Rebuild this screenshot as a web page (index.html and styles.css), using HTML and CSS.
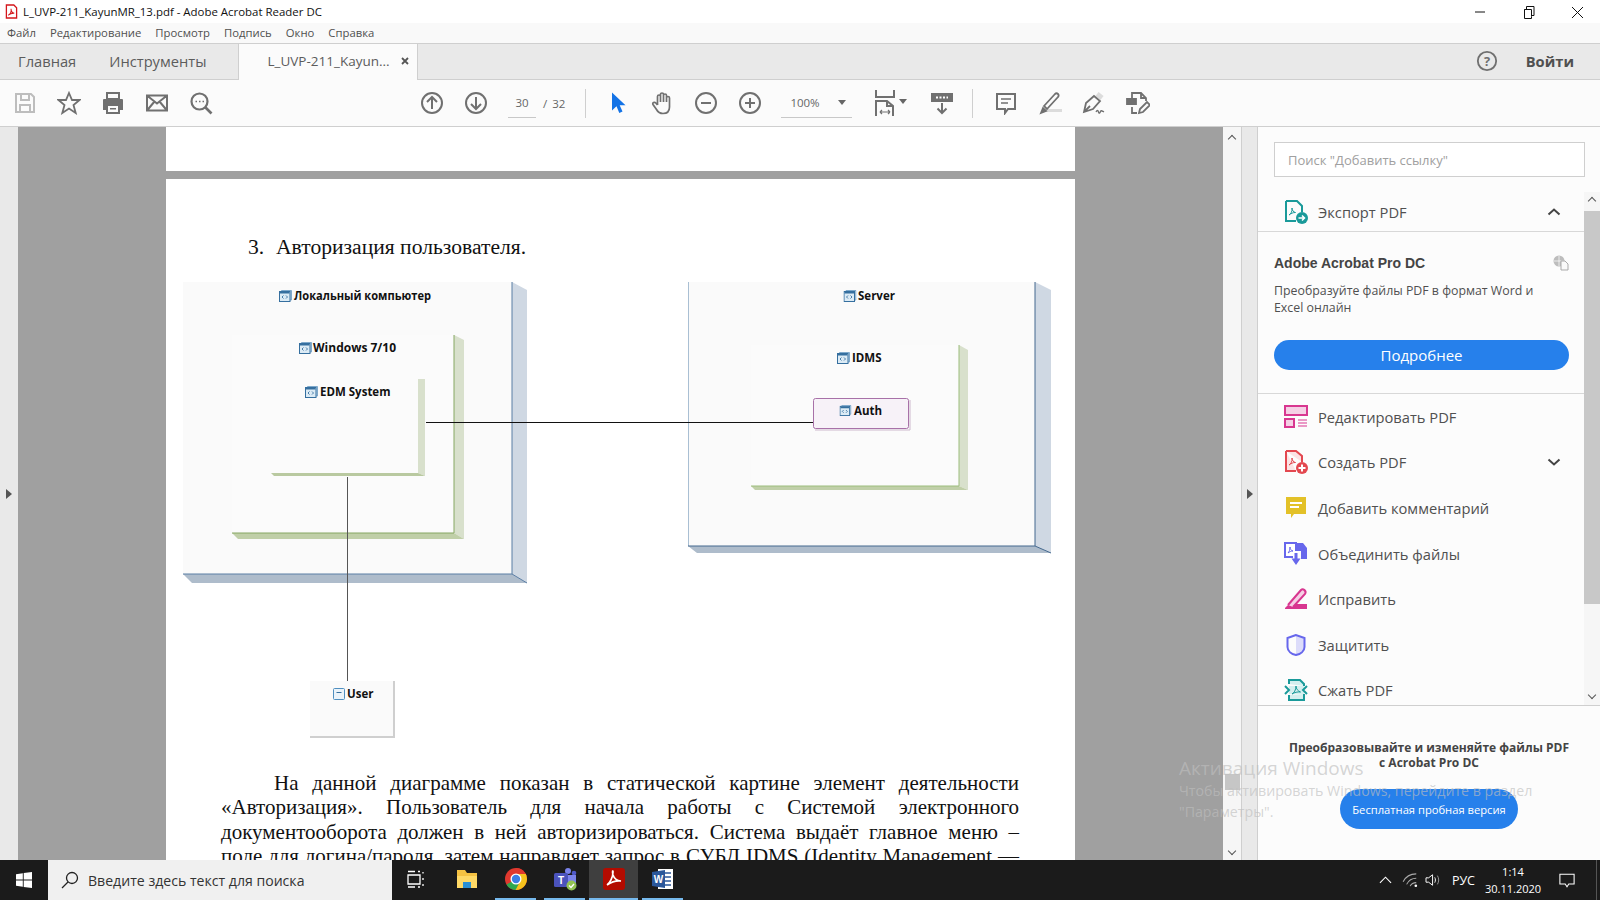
FILE: index.html
```html
<!DOCTYPE html>
<html lang="ru">
<head>
    <meta charset="UTF-8">
    <title>L_UVP-211_KayunMR_13.pdf - Adobe Acrobat Reader DC</title>
    <link rel="stylesheet" href="styles.css">
</head>
<body>
    <!-- Window title -->
    <header class="titlebar">
        <svg class="title-icon" viewBox="0 0 14 16"><path d="M1.5 1h8l3 3v11h-11z" fill="#fff" stroke="#d4161b" stroke-width="1.4"/><path d="M3.5 12c2-1 3.5-4 3-7 0 2.500 1.500 4.500 3.500 5-2.500-.2-4.500.5-6.500 2z" fill="none" stroke="#d4161b" stroke-width="1.100"/></svg>
        <span class="title-text">L_UVP-211_KayunMR_13.pdf - Adobe Acrobat Reader DC</span>
        <div class="window-btns">
            <svg class="win-btn" viewBox="0 0 46 20"><path d="M13 10h10" stroke="#111" fill="none"/></svg>
            <svg class="win-btn" viewBox="0 0 46 20"><path d="M18.500 7.500h-2v9h7v-2M18.500 7.500v-3h7.500v9h-2.500M16.500 7.500h7v7" stroke="#111" fill="none"/></svg>
            <svg class="win-btn" viewBox="0 0 46 20"><path d="M18 5l11 11M29 5l-11 11" stroke="#111" fill="none"/></svg>
        </div>
    </header>

    <!-- Menu -->
    <nav class="menubar">
        <span>Файл</span>
        <span>Редактирование</span>
        <span>Просмотр</span>
        <span>Подпись</span>
        <span>Окно</span>
        <span>Справка</span>
    </nav>

    <!-- Tabs -->
    <div class="tabbar">
        <span class="tab tab-home">Главная</span>
        <span class="tab tab-tools">Инструменты</span>
        <div class="tab-active">
            <span>L_UVP-211_Kayun...</span>
            <svg class="tab-close" viewBox="0 0 10 10"><path d="M2 2l6 6M8 2l-6 6" stroke="#555" stroke-width="1.800"/></svg>
        </div>
        <svg class="help-icon" viewBox="0 0 24 24"><circle cx="12" cy="12" r="10" fill="none" stroke="#707070" stroke-width="2"/><text class="help-mark" x="12" y="17" text-anchor="middle">?</text></svg>
        <span class="signin">Войти</span>
    </div>

    <!-- Toolbar -->
    <div class="toolbar">
        <div class="tool"><svg viewBox="0 0 24 24" fill="none" stroke="#bdbdbd" stroke-width="2"><path d="M3 3h15l3 3v15H3z"/><path d="M8 3v6h8V3M7 21v-7h10v7"/></svg></div>
        <div class="tool"><svg viewBox="0 0 24 24" fill="none" stroke="#707070" stroke-width="1.800"><path d="M12 2l3 7h7.500l-6 5 2.200 8-6.700-4.500L5.300 22l2.200-8-6-5H9z"/></svg></div>
        <div class="tool"><svg viewBox="0 0 24 24"><path d="M6 2h12v6H6z" fill="none" stroke="#707070" stroke-width="2"/><path d="M3 8h18a1 1 0 0 1 1 1v10h-4v-5H6v5H2V9a1 1 0 0 1 1-1z" fill="#707070"/><path d="M6 14h12v8H6z" fill="none" stroke="#707070" stroke-width="2"/><path d="M9 17h6v1.500H9z" fill="#707070"/></svg></div>
        <div class="tool"><svg viewBox="0 0 24 24" fill="none" stroke="#707070" stroke-width="2"><path d="M2 4.500h20v15H2zM2 4.500l10 8 10-8M2 19.500l7.500-9M22 19.500l-7.500-9"/></svg></div>
        <div class="tool"><svg viewBox="0 0 24 24" fill="none" stroke="#707070" stroke-width="2.200"><circle cx="10.500" cy="10.500" r="8"/><path d="M16 16l6.500 6.500" stroke-width="2.600"/><path d="M6.500 10.500h1.500M10 10.500h1.500M13.500 10.500H15" stroke-width="1.600"/></svg></div>

        <div class="tool nav-first"><svg viewBox="0 0 24 24" fill="none" stroke="#707070" stroke-width="2"><circle cx="12" cy="12" r="10"/><path d="M12 18V6.500M7 11l5-5 5 5"/></svg></div>
        <div class="tool"><svg viewBox="0 0 24 24" fill="none" stroke="#707070" stroke-width="2"><circle cx="12" cy="12" r="10"/><path d="M12 6v11.500M7 13l5 5 5-5"/></svg></div>
        <span class="page-input">30</span>
        <span class="page-slash">/</span>
        <span class="page-total">32</span>
        <i class="tool-sep sep-nav"></i>

        <div class="tool"><svg viewBox="0 0 24 24"><path d="M6 1.500v18l4.500-4.200 2.800 6.700 3.200-1.400-2.800-6.300h5.800z" fill="#1473e6"/></svg></div>
        <div class="tool"><svg viewBox="0 0 24 24" fill="none" stroke="#707070" stroke-width="1.700"><path d="M7.500 14V5.500a1.500 1.500 0 0 1 3 0V11M10.500 11V3.500a1.500 1.500 0 0 1 3 0V11M13.500 11V4.500a1.500 1.500 0 0 1 3 0V11M16.500 11V7a1.500 1.500 0 0 1 3 0v9c0 4-2.500 6.500-6.500 6.500-3 0-5-1.200-6.500-4L3 13.500c-1-1.800 1.500-3 2.800-1.500l1.700 2"/></svg></div>
        <div class="tool"><svg viewBox="0 0 24 24" fill="none" stroke="#707070" stroke-width="2"><circle cx="12" cy="12" r="10"/><path d="M7 12h10"/></svg></div>
        <div class="tool"><svg viewBox="0 0 24 24" fill="none" stroke="#707070" stroke-width="2"><circle cx="12" cy="12" r="10"/><path d="M7 12h10M12 7v10"/></svg></div>

        <div class="zoom-select">
            <span>100%</span>
            <i class="caret"></i>
        </div>

        <div class="tool tool-fit">
            <svg viewBox="0 0 24 26" fill="none" stroke="#707070" stroke-width="2"><path d="M2 0v7h18V0M2 26V11h11l6 5v10M13 11v5h6"/><path d="M6 22h10M6 22l2-2M6 22l2 2M16 22l-2-2M16 22l-2 2" stroke-width="1.200"/></svg>
            <i class="caret"></i>
        </div>
        <div class="tool"><svg viewBox="0 0 24 24" fill="none" stroke="#707070"><path d="M2 3h20v7H2z" fill="#707070" stroke-width="2"/><path d="M6 6.500h12" stroke="#fff" stroke-width="2" stroke-dasharray="2 1.500"/><path d="M12 12v10M7.500 17.500L12 22l4.500-4.500" stroke-width="2"/></svg></div>
        <i class="tool-sep sep-read"></i>

        <div class="tool"><svg viewBox="0 0 24 24" fill="none" stroke="#707070" stroke-width="2"><path d="M3 3h18v15h-7l-3 4v-4H3z"/><path d="M7 8h10M7 12h7" stroke-width="1.500"/></svg></div>
        <div class="tool"><svg viewBox="0 0 24 24"><path d="M4 22l3-1h17v-3H7z" fill="#dcdcdc"/><path d="M3 22l2-5 3 3zM6 15L17 3c2-2 5 1 3 3L9 18z" fill="none" stroke="#707070" stroke-width="1.800"/><path d="M3 22l2-5 3 3z" fill="#707070"/></svg></div>
        <div class="tool"><svg viewBox="0 0 24 24" fill="none" stroke="#707070" stroke-width="1.800"><path d="M15 3l5 4" stroke="#dcdcdc" stroke-width="5"/><path d="M2 21l2-9 8-7 6 5-7 8zM2 21l6-6"/><path d="M14 21c1-2 2-2 2.500 0s1.500 1 2-.5 1.500-.5 3.500.5" stroke-width="1.300"/></svg></div>
        <div class="tool"><svg viewBox="0 0 24 24" fill="none" stroke="#707070" stroke-width="1.800"><path d="M6 7V2h9l5 5v3M15 2v5h5M6 16v6h5"/><path d="M1 8h9v5H1z" fill="#707070"/><path d="M13 22l1-4 7-7 3 3-7 7z"/></svg></div>
    </div>

    <div class="workspace">
        <div class="left-rail"><i class="rail-arrow"></i></div>

        <!-- Document -->
        <main class="doc">
            <div class="page-end"></div>
            <article class="page">
                <h3 class="page-heading"><span>3.</span>Авторизация пользователя.</h3>
                <svg class="diagram" viewBox="166 259 909 500" width="909" height="500">
                    <defs>
                        <symbol id="node-mark" viewBox="0 0 13 12"><path d="M2.500 1.500V.5h10V10h-1.500" fill="#b9d2e6" stroke="#7fa9cb"/><rect x=".5" y="1.500" width="10.500" height="10" fill="#dcebf5" stroke="#356f9f"/><path d="M1 2h9.500v1.500H1z" fill="#356f9f"/><path d="M4.500 5.500l-1.500 1.500 1.500 1.500M7 5.500l1.500 1.500-1.500 1.500" fill="none" stroke="#356f9f" stroke-width=".9"/></symbol>
                        <symbol id="actor-mark" viewBox="0 0 12 12"><rect x=".5" y=".5" width="11" height="11" rx="1" fill="#eaf3fa" stroke="#4f8fc0"/><path d="M3.500 4.500h5" stroke="#356f9f"/></symbol>
                    </defs>

                    <!-- Локальный компьютер -->
                    <rect x="183" y="282" width="329" height="292" fill="#fafafa"/>
                    <path d="M512 282l15 8v293l-15-9z" fill="#cfd8e3"/>
                    <path d="M183 574h329l15 9H192z" fill="#aebccb"/>
                    <path d="M512 282v292l15 9M183 574h329" fill="none" stroke="#5b7ea5"/>
                    <use href="#node-mark" x="279" y="290" width="13" height="12"/>
                    <text class="node-label" x="294" y="300" textLength="137" lengthAdjust="spacingAndGlyphs">Локальный компьютер</text>

                    <rect x="232" y="335" width="222" height="198" fill="#fbfbfb"/>
                    <path d="M454 335l10 5v199l-10-6z" fill="#d8e0cc"/>
                    <path d="M232 533h222l10 6H238z" fill="#c0cfa8"/>
                    <path d="M454 335v198M232 533h222" fill="none" stroke="#86a762"/>
                    <use href="#node-mark" x="299" y="342" width="13" height="12"/>
                    <text class="node-label" x="313" y="352" textLength="83" lengthAdjust="spacingAndGlyphs">Windows 7/10</text>

                    <rect x="271" y="379" width="147" height="94" fill="#fbfbfb"/>
                    <path d="M418 379h7v97l-7-3z" fill="#d8e0cc"/>
                    <path d="M271 473h147l7 3H274z" fill="#b9c9a0"/>
                    <use href="#node-mark" x="305" y="386" width="13" height="12"/>
                    <text class="node-label" x="320" y="396">EDM System</text>

                    <!-- Server -->
                    <rect x="688.500" y="282" width="346.500" height="264" fill="#fafafa" />
                    <path d="M688.500 282v264" stroke="#a9bfd3" fill="none"/>
                    <path d="M1035 282l16 8v263l-16-7z" fill="#cfd8e3"/>
                    <path d="M688 546h347l16 7H697z" fill="#aebccb"/>
                    <path d="M1035 282v264l16 7M688 546h347" fill="none" stroke="#45698f"/>
                    <use href="#node-mark" x="843.500" y="290" width="13" height="12"/>
                    <text class="node-label" x="858" y="300">Server</text>

                    <rect x="751" y="345" width="208" height="141" fill="#fbfbfb"/>
                    <path d="M959 345l9 5v140l-9-4z" fill="#d8e0cc"/>
                    <path d="M751 486h208l9 4H755z" fill="#c0cfa8"/>
                    <path d="M959 345v141M751 486h208" fill="none" stroke="#9cbd7c"/>
                    <use href="#node-mark" x="837" y="352" width="13" height="12"/>
                    <text class="node-label" x="852" y="362">IDMS</text>

                    <rect x="813.500" y="398.500" width="95" height="30" rx="2" fill="#f7f2f8" stroke="#a871a8"/>
                    <path d="M815 430h95v-30" fill="none" stroke="#cdb9cd"/>
                    <use href="#node-mark" x="839.500" y="405" width="12" height="11"/>
                    <text class="node-label" x="854" y="415">Auth</text>

                    <!-- User -->
                    <rect x="310" y="681" width="83" height="55" fill="#fafafa"/>
                    <path d="M310 737h84v-56" fill="none" stroke="#cfcfcf" stroke-width="2"/>
                    <use href="#actor-mark" x="333" y="688" width="12" height="12"/>
                    <text class="node-label" x="347" y="698">User</text>

                    <!-- Links -->
                    <path d="M426 422.500h387" stroke="#111" fill="none"/>
                    <path d="M347.500 477v204" stroke="#555" fill="none"/>
                </svg>
                <p class="page-text">На данной диаграмме показан в статической картине элемент деятельности «Авторизация». Пользователь для начала работы с Системой электронного документооборота должен в ней авторизироваться. Система выдаёт главное меню –<br>поле для логина/пароля, затем направляет запрос в СУБД IDMS (Identity Management —</p>
            </article>
        </main>

        <div class="doc-scroll">
            <i class="arrow-up"></i>
            <div class="doc-thumb"></div>
            <i class="arrow-down"></i>
        </div>
        <div class="pane-rail"><i class="rail-arrow"></i></div>

        <!-- Tools pane -->
        <aside class="sidebar">
            <div class="search-wrap">
                <div class="search-box">Поиск "Добавить ссылку"</div>
            </div>
            <div class="tools-panel">
                <div class="tools-list">
                    <div class="tool-row row-open">
                        <svg viewBox="0 0 24 24"><path d="M2 1h11l5 5v6" fill="none" stroke="#1a9a9a" stroke-width="2"/><path d="M2 1v20h10" fill="none" stroke="#1a9a9a" stroke-width="2"/><path d="M5 15c2-1 3.500-4 3-7 0 2.500 1.500 4 3.500 4.500-2.500 0-4.500.8-6.500 2.500z" fill="none" stroke="#1a9a9a"/><circle cx="18" cy="18" r="6" fill="#1a9a9a"/><path d="M14.500 18h6M18 15.500l2.500 2.500-2.500 2.500" fill="none" stroke="#fff" stroke-width="1.500"/></svg>
                        <span>Экспорт PDF</span>
                        <svg class="chev" viewBox="0 0 14 10"><path d="M1.500 7.500L7 2.500l5.500 5" fill="none" stroke="#444" stroke-width="2"/></svg>
                    </div>
                    <div class="export-info">
                        <div class="info-head">
                            <strong>Adobe Acrobat Pro DC</strong>
                            <svg viewBox="0 0 16 16"><circle cx="6" cy="6" r="5.500" fill="#bdbdbd"/><path d="M1 6h10M6 1v10" stroke="#fff" stroke-width=".7"/><path d="M8 6h4l3 3v6H8z" fill="#fafafa" stroke="#aaa"/></svg>
                        </div>
                        <p>Преобразуйте файлы PDF в формат Word и Excel онлайн</p>
                        <div class="cta-main">Подробнее</div>
                    </div>
                    <div class="tool-row">
                        <svg viewBox="0 0 24 24"><path d="M1 1h22v9H1z" fill="#f5d0e5" stroke="#d83790" stroke-width="2"/><path d="M1 14h9v8H1z" fill="#f5d0e5" stroke="#d83790" stroke-width="2"/><path d="M14 15h9M14 18h9M14 21h9" stroke="#d83790"/></svg>
                        <span>Редактировать PDF</span>
                    </div>
                    <div class="tool-row">
                        <svg viewBox="0 0 24 24"><path d="M2 1h10l6 5v6M2 1v20h10" fill="#fbe3e4" stroke="#e34850" stroke-width="2"/><path d="M5 15c2-1 3.500-4 3-7 0 2.500 1.500 4 3.500 4.500-2.500 0-4.500.8-6.500 2.500z" fill="none" stroke="#e34850"/><circle cx="18" cy="18" r="6" fill="#e34850"/><path d="M14.500 18h7M18 14.500v7" stroke="#fff" stroke-width="2"/></svg>
                        <span>Создать PDF</span>
                        <svg class="chev" viewBox="0 0 14 10"><path d="M1.500 2.500L7 7.500l5.500-5" fill="none" stroke="#444" stroke-width="2"/></svg>
                    </div>
                    <div class="tool-row">
                        <svg viewBox="0 0 24 24"><path d="M2 1h20v17H10l-3 4v-4H2z" fill="#e3c128"/><path d="M6 7h12M6 11h9" stroke="#fff" stroke-width="2"/></svg>
                        <span>Добавить комментарий</span>
                    </div>
                    <div class="tool-row">
                        <svg viewBox="0 0 24 24"><path d="M9 15H1V1h11v8" fill="#fff" stroke="#6767ec" stroke-width="2"/><path d="M13 1h6l4 5v11h-6V9h-4z" fill="#6767ec"/><path d="M4 11c1-1 2-3 2-6 0 2 1 3.500 3 4-2 0-3.500.8-5 2z" fill="none" stroke="#6767ec"/><path d="M12 11v7M7.500 16.500h3V11h3v5.500h3L12 23z" fill="#6767ec"/></svg>
                        <span>Объединить файлы</span>
                    </div>
                    <div class="tool-row">
                        <svg viewBox="0 0 24 24"><path d="M1 21l4-4h18v5H1z" fill="#d83790"/><path d="M4 18L17 3c2-2 6 1 4 4L9 20" fill="#f5d0e5" stroke="#d83790" stroke-width="2"/></svg>
                        <span>Исправить</span>
                    </div>
                    <div class="tool-row">
                        <svg viewBox="0 0 24 24"><path d="M12 2l8.500 3v9c0 4-4 7-8.500 8z" fill="#dcdcfa"/><path d="M12 2L3.500 5v9c0 4 4 7 8.500 8 4.500-1 8.500-4 8.500-8V5z" fill="none" stroke="#6767ec" stroke-width="2"/></svg>
                        <span>Защитить</span>
                    </div>
                    <div class="tool-row">
                        <svg viewBox="0 0 24 24"><path d="M5 6V2h11l4 4v2M5 17v5h15v-6" fill="#d4efef" stroke="#1a9a9a" stroke-width="2"/><path d="M5 8v8h15V8z" fill="#d4efef"/><path d="M1 8l4 4-4 4M23 8l-4 4 4 4" fill="none" stroke="#1a9a9a" stroke-width="2"/><path d="M8 16c2-1 4-4 4-8 0 3 2 5 4.500 6-3-.3-6 .3-8.500 2z" fill="none" stroke="#1a9a9a"/></svg>
                        <span>Сжать PDF</span>
                    </div>
                </div>
                <div class="side-scroll">
                    <i class="arrow-up"></i>
                    <div class="side-thumb"></div>
                    <i class="arrow-down"></i>
                </div>
            </div>
            <div class="promo">
                <strong>Преобразовывайте и изменяйте файлы PDF<br>с Acrobat Pro DC</strong>
                <div class="cta-trial">Бесплатная пробная версия</div>
            </div>
        </aside>
    </div>

    <!-- Taskbar -->
    <footer class="taskbar">
        <div class="start">
            <svg viewBox="0 0 16 16" fill="#fff"><path d="M0 2.200l6.800-1v6.300H0zM7.700 1l8.300-1v7.500H7.700zM0 8.500h6.800v6.300l-6.800-1zM7.700 8.500H16V16l-8.300-1.100z"/></svg>
        </div>
        <div class="task-search">
            <svg viewBox="0 0 18 18" fill="none" stroke="#222" stroke-width="1.300"><circle cx="11" cy="7" r="5.500"/><path d="M7 11l-6 6"/></svg>
            <span>Введите здесь текст для поиска</span>
        </div>
        <div class="task-app app-view">
            <svg viewBox="0 0 18 18" fill="none" stroke="#fff" stroke-width="1.300"><path d="M1 5h12v9H1zM1 1.500h7M1 17h7M11 1.500h2M11 17h2M16 2v1.500M16 8v2M16 14v2"/></svg>
        </div>
        <div class="task-app app-files">
            <svg viewBox="0 0 24 24"><path d="M2 3h8l2 3h10v15H2z" fill="#f5c242"/><path d="M2 9h20v12H2z" fill="#ffd966"/><path d="M8 15h8v6H8z" fill="#2a8fd4"/></svg>
        </div>
        <div class="task-app is-open">
            <svg viewBox="0 0 24 24"><circle cx="12" cy="12" r="11" fill="#e0382e"/><path d="M12 12L2.500 17.500A11 11 0 0 0 12 23l5-11z" fill="#2fa84f"/><path d="M12 1a11 11 0 0 1 10.500 8H12z" fill="#e0382e"/><path d="M21.800 7H12l5 6-5.500 10A11 11 0 0 0 21.800 7z" fill="#f6c21c"/><circle cx="12" cy="12" r="5.500" fill="#fff"/><circle cx="12" cy="12" r="4.200" fill="#3d7ee6"/></svg>
        </div>
        <div class="task-app is-open">
            <svg viewBox="0 0 24 24"><circle cx="15" cy="4" r="3" fill="#7b83eb"/><circle cx="21" cy="6" r="2.300" fill="#5059c9"/><path d="M12 8h11v8c0 3-2.500 5-5.500 5S12 19 12 16z" fill="#7b83eb"/><rect x="1" y="6" width="14" height="14" rx="1.500" fill="#4b53bc"/><text class="teams-t" x="8" y="17" text-anchor="middle">T</text><circle cx="18.500" cy="18.500" r="5" fill="#92c353"/><path d="M16 18.500l2 2 3-3.500" fill="none" stroke="#fff" stroke-width="1.300"/></svg>
        </div>
        <div class="task-app is-open is-active">
            <svg viewBox="0 0 24 24"><rect x="1" y="1" width="22" height="22" rx="3" fill="#b30b00"/><path d="M5 18c3-2 6-8 6-13 0-2-1-1 0 3 1 3 4 6 8 6-4-.5-9 .5-14 4z" fill="none" stroke="#fff" stroke-width="1.700"/></svg>
        </div>
        <div class="task-app is-open">
            <svg viewBox="0 0 24 24"><path d="M7 2h15v20H7z" fill="#fff"/><path d="M13 6h7M13 10h7M13 14h7M13 18h7" stroke="#2b579a" stroke-width="1.500"/><path d="M1 5l13-2v18L1 19z" fill="#2b579a"/><text class="word-w" x="7.500" y="15.500" text-anchor="middle">W</text></svg>
        </div>

        <div class="tray">
            <svg class="tray-caret" viewBox="0 0 14 8" fill="none" stroke="#fff" stroke-width="1.200"><path d="M1 7l6-6 6 6"/></svg>
            <svg class="tray-wifi" viewBox="0 0 20 16" fill="none" stroke="#aaa" stroke-width="1.200"><path d="M1 10C4 4 10 1 16 1M5 13c2-4 6-7 11-7M9 15c1-2 4-4 7-4"/><circle cx="15.500" cy="14.500" r="1.500" fill="#fff" stroke="none"/></svg>
            <svg class="tray-sound" viewBox="0 0 18 16" fill="none" stroke="#fff" stroke-width="1.100"><path d="M1 5.500h3L8.500 2v12L4 10.500H1z"/><path d="M11 5c1 2 1 4 0 6" /><path d="M14 3c2 3 2 7 0 10" stroke="#999"/></svg>
            <span class="tray-lang">РУС</span>
            <div class="tray-clock">
                <span>1:14</span>
                <span>30.11.2020</span>
            </div>
            <svg class="tray-note" viewBox="0 0 18 16" fill="none" stroke="#fff" stroke-width="1.200"><path d="M1 1h16v11H11l-2 3-2-3H1z"/></svg>
            <i class="tray-edge"></i>
        </div>
    </footer>

    <!-- Activation watermark sits over everything -->
    <div class="watermark">
        <div class="wm-title">Активация Windows</div>
        <div class="wm-text">Чтобы активировать Windows, перейдите в раздел<br>"Параметры".</div>
    </div>
</body>
</html>
```

FILE: styles.css
```css
/* Global */
html, body {
    height: 100%;
}

body {
    margin: 0;
    width: 1600px;
    height: 900px;
    overflow: hidden;
    display: flex;
    flex-direction: column;
    position: relative;
    font-family: "Open Sans", "Noto Sans", sans-serif;
    color: #4b4b4b;
    background: #fff;
}

/* Title bar */
.titlebar {
    height: 23px;
    display: flex;
    align-items: center;
    flex-shrink: 0;
    background: #fff;
}

.title-icon {
    width: 13px;
    height: 15px;
    margin-left: 5px;
}

.title-text {
    margin-left: 5px;
    font-size: 11.450px;
    color: #111;
}

.window-btns {
    display: flex;
    margin-left: auto;
}

.win-btn {
    width: 46px;
    height: 20px;
    display: block;
}

/* Menu */
.menubar {
    height: 21px;
    display: flex;
    align-items: center;
    gap: 14px;
    padding: 0 0 2px 7px;
    box-sizing: border-box;
    flex-shrink: 0;
    background: #f9f9f9;
    border-bottom: 1px solid #cfcfcf;
    font-size: 11.300px;
    color: #505050;
}

/* Tabs */
.tabbar {
    height: 35px;
    display: flex;
    align-items: center;
    flex-shrink: 0;
    background: #e9e9e9;
    border-bottom: 1px solid #cfcfcf;
    font-size: 14.700px;
}

.tab {
    color: #5c5c5c;
    margin-bottom: 2px;
}

.tab-home {
    margin-left: 18px;
}

.tab-tools {
    margin-left: 33px;
}

.tab-active {
    position: relative;
    width: 180px;
    height: 36px;
    margin-left: 31px;
    display: flex;
    align-items: center;
    box-sizing: border-box;
    padding: 0 0 2px 29px;
    background: #fbfbfb;
    border-left: 1px solid #cfcfcf;
    border-right: 1px solid #cfcfcf;
    font-size: 13.500px;
    color: #5c5c5c;
    align-self: flex-start;
}

.tab-close {
    width: 10px;
    height: 10px;
    margin-left: 10px;
}

.help-icon {
    width: 22px;
    height: 22px;
    margin: 0 0 2px auto;
}

.help-mark {
    font-size: 14px;
    font-weight: 700;
    fill: #707070;
}

.signin {
    margin: 0 26px 2px 28px;
    font-weight: 700;
    color: #505050;
}

/* Toolbar */
.toolbar {
    height: 46px;
    display: flex;
    align-items: center;
    flex-shrink: 0;
    padding-left: 3px;
    background: #fbfbfb;
    border-bottom: 1px solid #cfcfcf;
    font-size: 11.500px;
    color: #666;
}

.tool {
    width: 44px;
    height: 26px;
    display: flex;
    align-items: center;
    justify-content: center;
    flex-shrink: 0;
}

.tool svg {
    width: 24px;
    height: 24px;
}

.nav-first {
    margin-left: 187px;
}

.page-input {
    width: 28px;
    height: 29px;
    margin: 0 0 -1px 10px;
    line-height: 28px;
    box-sizing: border-box;
    text-align: center;
    border-bottom: 1px solid #c8c8c8;
}

.page-slash {
    margin-left: 7px;
}

.page-total {
    margin-left: 5px;
}

.tool-sep {
    width: 1px;
    height: 29px;
    background: #cfcfcf;
    flex-shrink: 0;
}

.sep-nav {
    margin: 0 10px 0 20px;
}

.zoom-select {
    width: 71px;
    height: 29px;
    margin-left: 9px;
    display: flex;
    align-items: center;
    justify-content: space-between;
    box-sizing: border-box;
    padding: 0 6px 0 9px;
    border-bottom: 1px solid #c8c8c8;
    flex-shrink: 0;
}

.caret {
    width: 0;
    height: 0;
    border-left: 4px solid transparent;
    border-right: 4px solid transparent;
    border-top: 5px solid #666;
}

.tool-fit {
    position: relative;
    margin-left: 12px;
}

.tool-fit svg {
    height: 26px;
}

.tool-fit .caret {
    position: absolute;
    right: 1px;
    top: 9px;
}

.tool-sep.sep-read {
    margin: 0 11px 0 8px;
}

.tool-fit + .tool {
    margin-left: 12px;
}

/* Main area */
.workspace {
    flex: 1;
    min-height: 0;
    display: flex;
    overflow: hidden;
}

.left-rail,
.pane-rail {
    display: flex;
    align-items: center;
    justify-content: center;
    flex-shrink: 0;
    background: #e9e9e9;
}

.left-rail {
    width: 18px;
}

.pane-rail {
    width: 15px;
    border-left: 1px solid #cfcfcf;
    border-right: 1px solid #cfcfcf;
}

.rail-arrow {
    width: 0;
    height: 0;
    border-top: 5px solid transparent;
    border-bottom: 5px solid transparent;
    border-left: 6px solid #555;
}

.doc {
    width: 1205px;
    flex-shrink: 0;
    display: flex;
    flex-direction: column;
    align-items: center;
    background: #a0a0a0;
    overflow: hidden;
}

.page-end {
    width: 909px;
    height: 44px;
    flex-shrink: 0;
    background: #fff;
}

.page {
    width: 909px;
    margin-top: 8px;
    padding-top: 56px;
    flex-shrink: 0;
    background: #fff;
    font-family: "Liberation Serif", serif;
    color: #111;
}

.page-heading {
    margin: 0;
    padding-left: 82px;
    display: flex;
    font-size: 21.600px;
    line-height: 24px;
    font-weight: 400;
}

.page-heading span {
    width: 28px;
}

.diagram {
    display: block;
}

.node-label {
    font-family: "Open Sans", sans-serif;
    font-size: 11.500px;
    font-weight: 700;
    fill: #111;
}

.page-text {
    margin: 12px 56px 0 55px;
    font-size: 21px;
    word-spacing: -1.500px;
    line-height: 24.400px;
    text-align: justify;
    text-align-last: justify;
    text-indent: 53px;
}

/* Scrollbars */
.doc-scroll,
.side-scroll {
    display: flex;
    flex-direction: column;
    align-items: center;
    flex-shrink: 0;
    background: #f6f6f6;
}

.doc-scroll {
    width: 18px;
    padding: 6px 0;
    box-sizing: border-box;
}

.doc-thumb {
    width: 15px;
    height: 16px;
    margin-top: 632px;
    background: #c6c6c6;
}

.doc-scroll .arrow-down {
    margin-top: auto;
}

.arrow-up,
.arrow-down {
    width: 6px;
    height: 6px;
    border-left: 1.500px solid #555;
    border-top: 1.500px solid #555;
    box-sizing: border-box;
    transform: rotate(45deg);
    margin-top: 3px;
    flex-shrink: 0;
}

.arrow-down {
    transform: rotate(225deg);
    margin-top: 0;
}

.side-scroll {
    width: 16px;
}

.side-scroll .arrow-up {
    margin: 6px 0 7px;
}

.side-thumb {
    width: 16px;
    height: 393px;
    background: #c8c8c8;
}

.side-scroll .arrow-down {
    margin: auto 0 7px;
}

/* Tools pane */
.sidebar {
    flex: 1;
    min-width: 0;
    display: flex;
    flex-direction: column;
    background: #fcfcfc;
}

.search-wrap {
    padding: 15px 15px 15px 16px;
}

.search-box {
    height: 35px;
    box-sizing: border-box;
    padding-left: 13px;
    line-height: 35px;
    background: #fff;
    border: 1px solid #cfcfcf;
    font-size: 13px;
    color: #a0a0a0;
}

.tools-panel {
    height: 513px;
    display: flex;
    flex-shrink: 0;
    border-bottom: 1px solid #cfcfcf;
}

.tools-list {
    flex: 1;
    min-width: 0;
    overflow: hidden;
}

.tool-row {
    height: 45.600px;
    display: flex;
    align-items: center;
    padding: 0 23px 0 26px;
    box-sizing: border-box;
    font-size: 14.700px;
    color: #505050;
}

.tool-row svg {
    width: 24px;
    height: 24px;
    margin-right: 10px;
    flex-shrink: 0;
}

.tool-row .chev {
    width: 14px;
    height: 10px;
    margin: 0 0 0 auto;
}

.row-open {
    height: 40px;
    border-bottom: 1px solid #d8d8d8;
}

.export-info {
    height: 162px;
    box-sizing: border-box;
    padding: 23px 15px 0 16px;
    border-bottom: 1px solid #d8d8d8;
    font-size: 12.350px;
    color: #505050;
}

.info-head {
    display: flex;
    align-items: center;
    justify-content: space-between;
    font-size: 14px;
}

.info-head strong {
    font-family: "Liberation Sans", sans-serif;
    color: #444;
}

.info-head svg {
    width: 16px;
    height: 16px;
}

.export-info p {
    max-width: 275px;
    margin: 11px 0 0;
    line-height: 17px;
}

.cta-main,
.cta-trial {
    display: flex;
    align-items: center;
    justify-content: center;
    background: #2680eb;
    color: #fff;
}

.cta-main {
    height: 30px;
    margin-top: 24px;
    border-radius: 15px;
    font-size: 15px;
}

.promo {
    flex: 1;
    display: flex;
    flex-direction: column;
    align-items: center;
    padding-top: 34px;
    text-align: center;
    font-size: 12px;
    line-height: 15px;
    color: #444;
}

.cta-trial {
    width: 178px;
    height: 40px;
    margin-top: 19px;
    border-radius: 20px;
    font-size: 11.200px;
}

/* Taskbar */
.taskbar {
    height: 40px;
    display: flex;
    align-items: stretch;
    flex-shrink: 0;
    background: #1b1b1b;
    color: #fff;
}

.start {
    width: 48px;
    display: flex;
    align-items: center;
    justify-content: center;
}

.start svg {
    width: 16px;
    height: 16px;
}

.task-search {
    width: 344px;
    display: flex;
    align-items: center;
    box-sizing: border-box;
    padding-left: 13px;
    background: #f0f0f0;
    color: #333;
    font-size: 14.100px;
}

.task-search svg {
    width: 18px;
    height: 18px;
    margin-right: 9px;
}

.task-app {
    position: relative;
    width: 49px;
    display: flex;
    align-items: center;
    justify-content: center;
    box-sizing: border-box;
    padding-bottom: 2px;
}

.task-app svg {
    width: 24px;
    height: 24px;
}

.app-view {
    width: 48px;
}

.app-view svg {
    width: 18px;
    height: 18px;
}

.app-files {
    margin-left: 2px;
}

.is-open::after {
    content: "";
    position: absolute;
    left: 4px;
    right: 4px;
    bottom: 0;
    height: 2px;
    background: #76b9ed;
}

.is-active {
    background: #3f3f3f;
}

.is-active::after {
    left: 0;
    right: 0;
}

.teams-t,
.word-w {
    font-family: "Liberation Sans", sans-serif;
    font-size: 10px;
    font-weight: 700;
    fill: #fff;
}

.tray {
    margin-left: auto;
    display: flex;
    align-items: center;
    font-size: 12.500px;
}

.tray-caret {
    width: 13px;
    height: 8px;
    margin-right: 10px;
}

.tray-wifi {
    width: 18px;
    height: 14px;
    margin-right: 5px;
}

.tray-sound {
    width: 16px;
    height: 14px;
    margin-right: 11px;
}

.tray-clock {
    width: 66px;
    margin-left: 5px;
    display: flex;
    flex-direction: column;
    align-items: center;
    font-size: 11px;
    line-height: 17px;
}

.tray-note {
    width: 16px;
    height: 15px;
    margin-left: 13px;
}

.tray-edge {
    width: 1px;
    height: 40px;
    margin: 0 3px 0 21px;
    background: #555;
}

/* Watermark */
.watermark {
    position: absolute;
    left: 1179px;
    top: 754px;
    color: rgba(190, 190, 190, 0.65);
    pointer-events: none;
}

.wm-title {
    font-size: 19px;
    line-height: 28px;
}

.wm-text {
    margin-top: -2px;
    font-size: 14.200px;
    line-height: 21px;
}
```
